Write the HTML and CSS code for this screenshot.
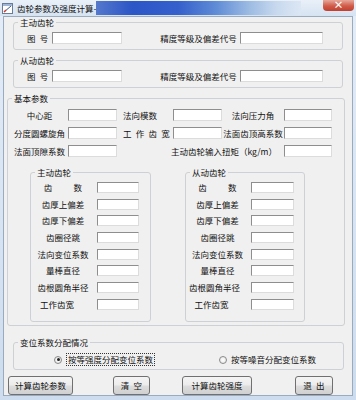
FILE: index.html
```html
<!DOCTYPE html>
<html lang="zh-CN">
<head>
    <meta charset="UTF-8">
    <title>齿轮参数及强度计算</title>
    <link rel="stylesheet" href="styles.css">
</head>
<body>
<div class="window">
    <div class="titlebar">
        <svg class="appicon" width="11" height="11" viewBox="0 0 11 11">
            <rect x="0.5" y="0.5" width="10" height="10" fill="#fff" stroke="#6b7c95"/>
            <rect x="1" y="1" width="9" height="2" fill="#9fb6d6"/>
            <path d="M2 9 L9 3" stroke="#3a5a8c" stroke-width="1"/>
            <path d="M2 9 L4 7" stroke="#d23a2a" stroke-width="1.4"/>
        </svg>
        <span class="title">齿轮参数及强度计算-</span>
        <span class="glass">&nbsp;</span>
        <span class="xbtn">×</span>
    </div>
    <div class="client">
        <!-- 主动齿轮 -->
        <fieldset class="grp grp-gear">
            <legend>主动齿轮</legend>
            <div class="row-id">
                <span class="lbl-no">图&ensp;号</span><input class="tb tb-no" type="text">
                <span class="lbl-grade">精度等级及偏差代号</span><input class="tb tb-grade" type="text">
            </div>
        </fieldset>
        <!-- 从动齿轮 -->
        <fieldset class="grp grp-gear">
            <legend>从动齿轮</legend>
            <div class="row-id">
                <span class="lbl-no">图&ensp;号</span><input class="tb tb-no" type="text">
                <span class="lbl-grade">精度等级及偏差代号</span><input class="tb tb-grade" type="text">
            </div>
        </fieldset>
        <!-- 基本参数 -->
        <fieldset class="grp grp-base">
            <legend>基本参数</legend>
            <div class="prow">
                <span class="pl1">中心距</span><input class="tb pi1" type="text">
                <span class="pl2">法向模数</span><input class="tb pi2" type="text">
                <span class="pl3">法向压力角</span><input class="tb pi3" type="text">
            </div>
            <div class="prow">
                <span class="pl1">分度圆螺旋角</span><input class="tb pi1" type="text">
                <span class="pl2">工&ensp;作&ensp;齿&ensp;宽</span><input class="tb pi2" type="text">
                <span class="pl3">法面齿顶高系数</span><input class="tb pi3" type="text">
            </div>
            <div class="prow">
                <span class="pl1">法面顶隙系数</span><input class="tb pi1" type="text">
                <span class="pl-torque">主动齿轮输入扭矩（kg/m）</span><input class="tb pi3" type="text">
            </div>
            <div class="subs">
                <fieldset class="grp sub sub-drive">
                    <legend>主动齿轮</legend>
                    <div class="sgrid">
                        <span>齿&emsp;&emsp;&ensp;数</span><input class="tb" type="text">
                        <span>齿厚上偏差</span><input class="tb" type="text">
                        <span>齿厚下偏差</span><input class="tb" type="text">
                        <span>齿圈径跳</span><input class="tb" type="text">
                        <span>法向变位系数</span><input class="tb" type="text">
                        <span>量棒直径</span><input class="tb" type="text">
                        <span>齿根圆角半径</span><input class="tb" type="text">
                        <span class="shift">工作齿宽</span><input class="tb" type="text">
                    </div>
                </fieldset>
                <fieldset class="grp sub sub-driven">
                    <legend>从动齿轮</legend>
                    <div class="sgrid">
                        <span>齿&emsp;&emsp;&ensp;数</span><input class="tb" type="text">
                        <span>齿厚上偏差</span><input class="tb" type="text">
                        <span>齿厚下偏差</span><input class="tb" type="text">
                        <span>齿圈径跳</span><input class="tb" type="text">
                        <span>法向变位系数</span><input class="tb" type="text">
                        <span>量棒直径</span><input class="tb" type="text">
                        <span class="shift-s">齿根圆角半径</span><input class="tb" type="text">
                        <span class="shift">工作齿宽</span><input class="tb" type="text">
                    </div>
                </fieldset>
            </div>
        </fieldset>
        <!-- 变位系数分配情况 -->
        <fieldset class="grp grp-mode">
            <legend>变位系数分配情况</legend>
            <div class="radios">
                <span class="radio on"></span><span class="rtext focus">按等强度分配变位系数</span>
                <span class="radio r2"></span><span class="rtext">按等噪音分配变位系数</span>
            </div>
        </fieldset>
        <div class="buttons">
            <button class="btn b1">计算齿轮参数</button>
            <button class="btn b2">清&ensp;空</button>
            <button class="btn b3">计算齿轮强度</button>
            <button class="btn b4">退&ensp;出</button>
        </div>
    </div>
</div>
</body>
</html>
```
FILE: styles.css
```css
*{
    margin: 0;
    padding: 0;
    box-sizing: border-box;
}
body{
    font-family: "Noto Sans CJK SC", "Liberation Sans", sans-serif;
    font-size: 8.5px;
    color: #111;
    background: #d6e4f3;
}
.window{
    width: 356px;
    height: 400px;
    padding-bottom: 4px;
    background: linear-gradient(#e4edf7, #cddcee);
}
/* 标题栏 */
.titlebar{
    height: 16px;
    display: flex;
    align-items: center;
    padding-left: 2px;
    background: linear-gradient(#e9f0f8, #d6e3f2);
}
.appicon{
    flex: none;
    margin-top: 1px;
}
.title{
    padding-left: 4px;
    white-space: nowrap;
}
.glass{
    width: 205px;
    height: 14px;
    background: linear-gradient(to right, #5478cc 0%, #2c55c6 18%, #3560cc 40%, #5e8ad6 58%, #9ab9e2 74%, #c8d9ee 88%, #dce7f4 100%);
}
.xbtn{
    width: 31px;
    height: 11px;
    margin-left: auto;
    margin-right: 2px;
    margin-bottom: 5px;
    background: linear-gradient(#e6a89a, #d05a48 55%, #c0402e);
    border-radius: 0 0 4px 4px;
    color: #fff;
    font-weight: bold;
    font-size: 10px;
    line-height: 10px;
    text-align: center;
}
/* 客户区 */
.client{
    height: 380px;
    margin: 0 3px;
    border: 1px solid #9aabbf;
    background: #f0f0f0;
}
.grp{
    border: 1px solid #cdd1d5;
    border-radius: 3px;
    min-width: 0;
}
.grp legend{
    margin-left: 4px;
    padding: 0 2px;
    line-height: 11px;
}
.grp-gear{
    margin-left: 9px;
    width: 330px;
    padding: 4px 0 5px;
}
.grp-gear + .grp-gear{
    margin-top: 5px;
}
.row-id{
    display: flex;
    align-items: center;
    height: 12px;
}
.lbl-no{
    margin-left: 13px;
}
.tb{
    display: block;
    height: 12px;
    background: #fff;
    border: 1px solid;
    border-color: #8e8e8e #dcdcdc #dcdcdc #8e8e8e;
    outline: none;
}
.tb-no{
    margin-left: 4px;
    width: 70px;
}
.lbl-grade{
    margin-left: 38px;
}
.tb-grade{
    margin-left: 3px;
    width: 83px;
}
/* 基本参数 */
.grp-base{
    margin: 5px 0 0 3px;
    width: 338px;
    padding: 5px 0 3px;
}
.prow{
    display: flex;
    align-items: center;
    height: 12px;
}
.prow + .prow{
    margin-top: 6px;
}
.pl1{
    margin-left: 5px;
    width: 53px;
    text-align: center;
}
.pi1{
    margin-left: 2px;
    width: 49px;
}
.pl2{
    width: 56px;
    padding-left: 6px;
    white-space: nowrap;
}
.pi2{
    width: 49px;
}
.pl3{
    width: 62px;
    text-align: center;
    white-space: nowrap;
}
.pi3{
    width: 48px;
}
.pl-torque{
    width: 167px;
    text-align: right;
    padding-right: 7px;
    white-space: nowrap;
}
.subs{
    display: flex;
    margin-top: 10px;
}
.sub{
    padding: 4px 0 11px;
}
.sub-drive{
    margin-left: 22px;
    width: 121px;
}
.sub-driven{
    margin-left: 34px;
    width: 120px;
}
.sgrid{
    display: grid;
    grid-template-columns: 64px 42px;
    column-gap: 2px;
    row-gap: 5.7px;
    align-items: center;
}
.sub-driven .sgrid{
    grid-template-columns: 63px 43px;
}
.sgrid span{
    text-align: center;
    line-height: 11px;
    white-space: nowrap;
}
.sgrid .tb{
    height: 11px;
}
.sgrid .shift{
    padding-right: 12px;
}
.sgrid .shift-s{
    padding-right: 6px;
}
/* 变位系数分配 */
.grp-mode{
    margin: 11px 0 0 9px;
    width: 331px;
    padding: 6px 0 3px;
}
.radios{
    display: flex;
    align-items: center;
    height: 12px;
}
.radio{
    width: 8px;
    height: 8px;
    border: 1px solid #8a8a8a;
    border-radius: 50%;
    background: radial-gradient(#ffffff, #e2e2e2);
    display: flex;
    align-items: center;
    justify-content: center;
    margin-left: 40px;
}
.radio.on::after{
    content: "";
    width: 3px;
    height: 3px;
    border-radius: 50%;
    background: #222;
}
.radio.r2{
    margin-left: 65px;
}
.rtext{
    margin-left: 4px;
    line-height: 11px;
    white-space: nowrap;
}
.rtext.focus{
    margin-left: 5px;
    padding: 0 1px;
    outline: 1px dotted #333;
}
/* 按钮 */
.buttons{
    display: flex;
    margin-top: 6px;
}
.btn{
    height: 19px;
    font: inherit;
    color: #111;
    border: 1px solid #707070;
    border-radius: 3px;
    background: linear-gradient(#f4f4f4 0%, #ececec 48%, #dddddd 52%, #d0d0d0 100%);
}
.b1{
    margin-left: 4px;
    width: 65px;
}
.b2{
    margin-left: 40px;
    width: 37px;
}
.b3{
    margin-left: 32px;
    width: 70px;
}
.b4{
    margin-left: 43px;
    width: 38px;
}
```
